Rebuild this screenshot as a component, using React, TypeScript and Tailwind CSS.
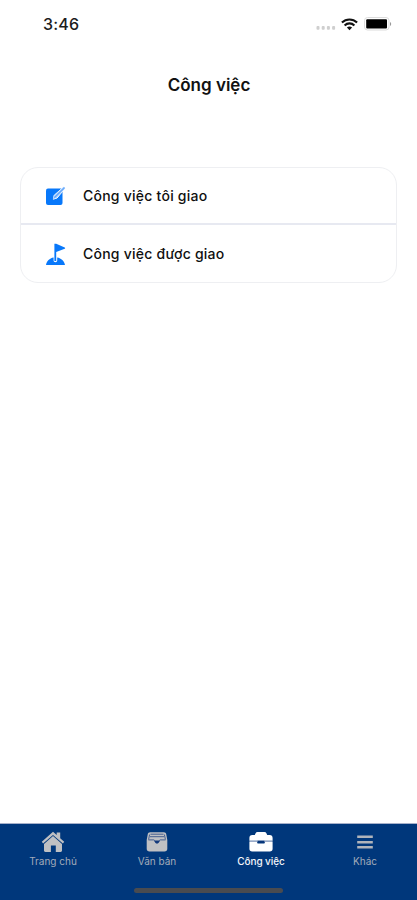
import type { ReactNode } from 'react'

function SignalDots() {
  return (
    <svg width="20" height="6" viewBox="0 0 20 6" fill="#cfcfcf">
      <rect x="0.5" y="1" width="3" height="3.8" rx="1" />
      <rect x="5.7" y="1" width="3" height="3.8" rx="1" />
      <rect x="10.9" y="1" width="3" height="3.8" rx="1" />
      <rect x="16.1" y="1" width="3" height="3.8" rx="1" />
    </svg>
  )
}

function WifiIcon() {
  return (
    <svg width="17" height="13" viewBox="0 0 17 13" fill="none" stroke="#111" strokeWidth="2.1">
      <path d="M0.9 4.6C5.2 0.4 11.8 0.4 16.1 4.6" />
      <path d="M3.6 7.4C6.4 4.7 10.6 4.7 13.4 7.4" />
      <path d="M8.5 12.2 5.9 9.5C7.4 8.1 9.6 8.1 11.1 9.5Z" fill="#111" stroke="none" />
    </svg>
  )
}

function BatteryIcon() {
  return (
    <svg width="28" height="14" viewBox="0 0 28 14">
      <rect x="0.5" y="0.5" width="24.5" height="12.5" rx="3" fill="#fff" stroke="#dcdcdc" />
      <rect x="2.2" y="2.2" width="20.8" height="9.2" rx="1" fill="#000" />
      <path d="M26 5c1.6.6 1.6 3.4 0 4z" fill="#999" />
    </svg>
  )
}

function EditIcon() {
  return (
    <svg width="22" height="20" viewBox="0 0 22 20">
      <rect x="1" y="2.5" width="16.5" height="16.5" rx="2" fill="#0878fa" />
      <path d="M8.3 13.2 9.2 9.3 19.3 0.3 20.7 1.7 12 12Z" fill="#fff" stroke="#fff" strokeWidth="1" />
      <path d="M8 13 9 9.9 18.7 0.8 20.2 2.2 11.2 11.9Z" fill="#8fc0fd" />
      <path d="m9.5 11.5 10-9.7" stroke="#5ca3fb" strokeWidth="1" />
    </svg>
  )
}

function FlagIcon() {
  return (
    <svg width="22" height="23" viewBox="0 0 22 23" fill="#0878fa">
      <path d="M9.4 0.8h1.8l8.5 3.8c.6.3.6.8 0 1.1l-8.5 3.4v8.9H9.4z" />
      <path d="M1 21.9c.7-3.8 3.5-6.7 7.6-7.4v3c0 2.2 3.6 2.2 3.6 0v-3c4.1.7 7.1 3.6 7.8 7.4z" />
    </svg>
  )
}

function HomeIcon() {
  return (
    <svg width="24" height="22" viewBox="0 0 24 22" fill="#bfc0c3">
      <path d="M12 0.8 15.7 4V1.6h3.5v5.6l4 3.6-1.3 1.8L12 3.9 2.1 12.6.8 10.8z" />
      <path d="M12 5.1 21 13v6.6c0 .9-.5 1.4-1.4 1.4h-4.8v-6.6H9.9V21H4.4c-.9 0-1.4-.5-1.4-1.4V13z" />
    </svg>
  )
}

function ArchiveIcon() {
  return (
    <svg width="24" height="22" viewBox="0 0 24 22">
      <path d="M5.1 1.2h13.8c1.3 0 2 .7 2.3 1.8L22.3 9v8.7c0 1.7-1.1 2.8-2.8 2.8h-15c-1.7 0-2.8-1.1-2.8-2.8V9l1.1-6c.3-1.1 1-1.8 2.3-1.8z" fill="#bfc0c3" />
      <path d="M5.5 3.2h13M5 5.7h14" stroke="#35528a" strokeWidth="0.9" />
      <path d="m4.6 3.5-1 5m15.8-5 1 5" stroke="#35528a" strokeWidth="0.9" />
      <path d="M3.4 8.9h5.5c.5 0 .6.4.7.9.6 2.4 4.2 2.4 4.8 0 .1-.5.2-.9.7-.9h5.5" fill="none" stroke="#35528a" strokeWidth="0.9" />
      <path d="M9.6 9.4h4.8c-.2 4.2-4.6 4.2-4.8 0z" fill="#12387b" />
    </svg>
  )
}

function BriefcaseIcon() {
  return (
    <svg width="24" height="22" viewBox="0 0 24 22" fill="#fff">
      <path d="M0.4 9.8V7c0-1.9 1-3 2.9-3h2.5l.8-1.8C7 1.4 7.6 1 8.5 1h7c.9 0 1.5.4 1.9 1.2l.8 1.8h2.5c1.9 0 2.9 1.1 2.9 3v2.8z" />
      <path d="M0.4 11h7.8v.5c0 .7.4 1 1 1h5.6c.6 0 1-.3 1-1V11h7.8v6.8c0 1.8-1 2.8-2.8 2.8H3.2c-1.8 0-2.8-1-2.8-2.8z" />
      <path d="M0.4 9.8h23.2V11H0.4z" fill="#9aabc9" />
      <path d="M8.6 9.8h6.8V11c0 .5-.3.8-.8.8H9.4c-.5 0-.8-.3-.8-.8z" fill="#07367b" />
    </svg>
  )
}

function MenuIcon() {
  return (
    <svg width="24" height="22" viewBox="0 0 24 22" fill="#b0b4bb">
      <path d="M4.2 4.5h15.6V7H4.2zM4.2 9.9h15.6v2.5H4.2zM4.2 15.1h15.6v2.5H4.2z" />
    </svg>
  )
}

function TaskRow({ icon, label }: { icon: ReactNode; label: string }) {
  return (
    <button className="flex w-full items-center px-6 text-left">
      <span className="flex w-[38px] pt-px">{icon}</span>
      <span className="text-sm font-medium tracking-[0.24px] text-[#101010]">{label}</span>
    </button>
  )
}

function Tab({ icon, label, active = false }: { icon: ReactNode; label: string; active?: boolean }) {
  return (
    <button
      className={
        active
          ? 'flex flex-1 flex-col items-center text-[#f4f6fa] font-medium tracking-[-0.1px]'
          : 'flex flex-1 flex-col items-center text-[#a3abb9]'
      }
    >
      {icon}
      <span className="text-[10px] leading-4">{label}</span>
    </button>
  )
}

export default function App() {
  return (
    <div className="flex h-screen w-full flex-col bg-white font-['Inter','Liberation_Sans',sans-serif]">
      <header className="flex h-12 shrink-0 items-center justify-between pl-[43px] pr-[25px]">
        <span className="text-base font-medium tracking-[0.2px] text-[#1c1c1c]">3:46</span>
        <div className="flex items-center">
          <span className="mt-2 mr-[5px]">
            <SignalDots />
          </span>
          <span className="mr-[6px]">
            <WifiIcon />
          </span>
          <BatteryIcon />
        </div>
      </header>

      <h1 className="mt-[25px] pl-px text-center text-[17px] leading-6 font-semibold text-[#111]">Công việc</h1>

      <main className="mt-[70px] flex-1 px-5">
        <div className="grid h-[116px] grid-rows-2 divide-y-2 divide-[#e7e9f1] rounded-[18px] border border-[#eeeff2]">
          <TaskRow icon={<EditIcon />} label="Công việc tôi giao" />
          <TaskRow icon={<FlagIcon />} label="Công việc được giao" />
        </div>
      </main>

      <nav className="flex h-[77px] shrink-0 flex-col border-t border-[#a6b0ca] bg-[#00377b]">
        <div className="flex pt-[7px] pl-px">
          <Tab icon={<HomeIcon />} label="Trang chủ" />
          <Tab icon={<ArchiveIcon />} label="Văn bản" />
          <Tab icon={<BriefcaseIcon />} label="Công việc" active />
          <Tab icon={<MenuIcon />} label="Khác" />
        </div>
        <div className="mx-auto mt-auto mb-[7px] h-[5px] w-[149px] rounded-full bg-[#494b50]" />
      </nav>
    </div>
  )
}
